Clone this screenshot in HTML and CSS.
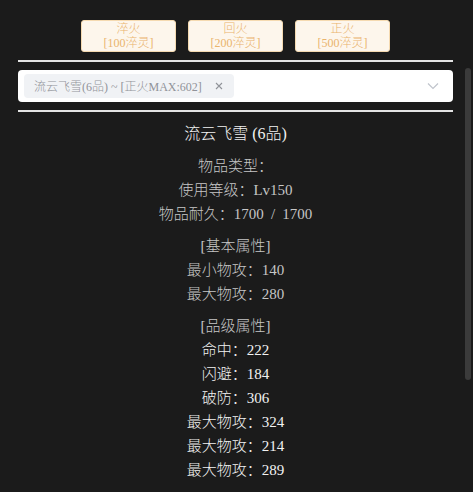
FILE: index.html
```html
<!DOCTYPE html>
<html lang="zh">
<head>
<meta charset="utf-8">
<title>流云飞雪</title>
<link rel="stylesheet" href="styles.css">
</head>
<body>
<div class="page">
  <div class="actions">
    <button class="btn">淬火<br>[100淬灵]</button>
    <button class="btn">回火<br>[200淬灵]</button>
    <button class="btn">正火<br>[500淬灵]</button>
  </div>
  <div class="rule"></div>
  <div class="select">
    <span class="tag">流云飞雪(6品) ~ [正火MAX:602]<svg class="tag-close" viewBox="0 0 12 12" width="12" height="12"><path d="M3 3L9 9M9 3L3 9" stroke="#909399" stroke-width="1.1" fill="none"/></svg></span>
    <svg class="arrow" viewBox="0 0 14 14" width="14" height="14"><path d="M2 4.5L7 9.5L12 4.5" stroke="#c0c4cc" stroke-width="1.2" fill="none"/></svg>
  </div>
  <div class="rule"></div>
  <div class="detail">
    <div class="title">流云飞雪 (6品)</div>
    <div class="group">
      <div class="row">物品类型：</div>
      <div class="row">使用等级：Lv150</div>
      <div class="row">物品耐久：1700 / 1700</div>
    </div>
    <div class="group">
      <div class="row">[基本属性]</div>
      <div class="row">最小物攻：140</div>
      <div class="row">最大物攻：280</div>
    </div>
    <div class="group">
      <div class="row">[品级属性]</div>
      <div class="row hi">命中：222</div>
      <div class="row hi">闪避：184</div>
      <div class="row hi">破防：306</div>
      <div class="row hi">最大物攻：324</div>
      <div class="row hi">最大物攻：214</div>
      <div class="row hi">最大物攻：289</div>
    </div>
  </div>
</div>
<div class="scroll-thumb"></div>
</body>
</html>
```
FILE: styles.css
```css
html, body {
  margin: 0;
  background: #1b1b1b;
  height: 100%;
  overflow: hidden;
}
body {
  font-family: "Liberation Serif", "Noto Sans CJK SC", serif;
  font-weight: 300;
  color: #c6c6c6;
  position: relative;
}
.page {
  padding: 20px 20px 0 18px;
}
.actions {
  display: flex;
  justify-content: center;
  gap: 12px;
}
.btn {
  width: 95px;
  height: 32px;
  padding: 0;
  background: #fdf6ec;
  border: 1px solid #f5dab1;
  border-radius: 3px;
  color: #eab46c;
  font-family: "Liberation Serif", "Noto Sans CJK SC", serif;
  font-weight: 300;
  font-size: 12px;
  line-height: 14px;
  text-align: center;
}
.rule {
  height: 2px;
  background: #e4e4e4;
  margin: 8px 0;
}
.select {
  height: 32px;
  background: #fff;
  border-radius: 4px;
  display: flex;
  align-items: center;
  padding: 0 13px 0 6px;
}
.tag {
  display: inline-flex;
  align-items: center;
  height: 24px;
  box-sizing: border-box;
  padding: 0 9px 0 10px;
  background: #f0f2f5;
  border-radius: 4px;
  color: #909399;
  font-size: 12px;
  white-space: nowrap;
}
.tag-close {
  margin-left: 11px;
}
.arrow {
  margin-left: auto;
}
.detail {
  padding-top: 2px;
  text-align: center;
}
.title {
  font-size: 16px;
  line-height: 24px;
  color: #f2f2f2;
}
.group {
  margin-top: 8px;
}
.row {
  font-size: 15px;
  line-height: 24px;
  word-spacing: 3.5px;
}
.row.hi {
  color: #f2f2f2;
}
.scroll-thumb {
  position: absolute;
  left: 465px;
  top: 68px;
  width: 6px;
  height: 312px;
  border-radius: 3px;
  background: #3b3b3b;
}
```
